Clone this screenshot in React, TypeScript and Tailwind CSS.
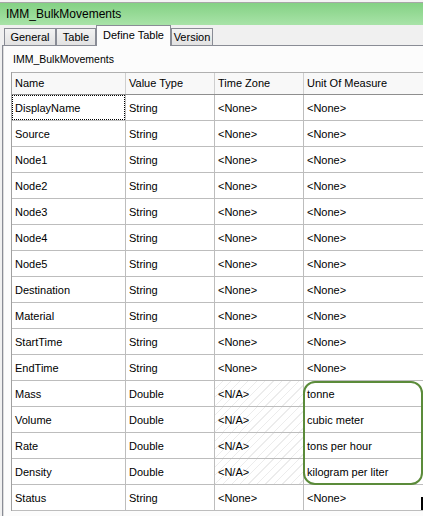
import React from 'react';

type Row = { name: string; type: string; tz: string; unit: string; na?: boolean };

const rows: Row[] = [
  { name: 'DisplayName', type: 'String', tz: '<None>', unit: '<None>' },
  { name: 'Source', type: 'String', tz: '<None>', unit: '<None>' },
  { name: 'Node1', type: 'String', tz: '<None>', unit: '<None>' },
  { name: 'Node2', type: 'String', tz: '<None>', unit: '<None>' },
  { name: 'Node3', type: 'String', tz: '<None>', unit: '<None>' },
  { name: 'Node4', type: 'String', tz: '<None>', unit: '<None>' },
  { name: 'Node5', type: 'String', tz: '<None>', unit: '<None>' },
  { name: 'Destination', type: 'String', tz: '<None>', unit: '<None>' },
  { name: 'Material', type: 'String', tz: '<None>', unit: '<None>' },
  { name: 'StartTime', type: 'String', tz: '<None>', unit: '<None>' },
  { name: 'EndTime', type: 'String', tz: '<None>', unit: '<None>' },
  { name: 'Mass', type: 'Double', tz: '<N/A>', unit: 'tonne', na: true },
  { name: 'Volume', type: 'Double', tz: '<N/A>', unit: 'cubic meter', na: true },
  { name: 'Rate', type: 'Double', tz: '<N/A>', unit: 'tons per hour', na: true },
  { name: 'Density', type: 'Double', tz: '<N/A>', unit: 'kilogram per liter', na: true },
  { name: 'Status', type: 'String', tz: '<None>', unit: '<None>' },
];

const tabs = ['General', 'Table', 'Define Table', 'Version'];

export default function App() {
  return (
    <div className="w-[423px] h-[516px] overflow-hidden bg-[#f0f0f0] text-black font-['Liberation_Sans',Arial,sans-serif] flex flex-col">
      <div className="h-[2px] bg-[#f4f4f4]" />

      {/* Title bar */}
      <div className="h-[23px] border-t border-[#a7a7a7] bg-gradient-to-b from-[#84d184] to-[#a8e3a8] flex items-center pl-[6px] text-[12px]">
        IMM_BulkMovements
      </div>

      {/* Tabs */}
      <div className="h-[20px] flex items-end pl-[4px] text-[11px]">
        {tabs.map(t =>
          t === 'Define Table' ? (
            <div
              key={t}
              className="relative z-10 h-[21px] -mb-px w-[75px] bg-[#fcfcfc] border border-b-0 border-[#898c95] flex items-center justify-center pb-[2px]"
            >
              {t}
            </div>
          ) : (
            <div
              key={t}
              className={`h-[17px] border border-b-0 border-[#898c95] bg-gradient-to-b from-[#f3f3f3] to-[#e2e2e2] flex items-center justify-center ${
                t === 'General' ? 'w-[52px]' : t === 'Table' ? 'w-[40px]' : 'w-[42px]'
              }`}
            >
              {t}
            </div>
          )
        )}
      </div>

      {/* Tab page */}
      <div className="flex-1 ml-[2px] border-t border-l border-[#898c95] bg-[#fcfcfc] shadow-[inset_1px_0_0_#dcdcdc] pl-[8px]">
        <div className="h-[26px] flex items-center pl-[2px] pt-[1px] text-[10.5px]">IMM_BulkMovements</div>

        <div className="relative border-l border-[#a0a0a0] bg-white w-[420px] text-[11px]">
          {/* header */}
          <div className="grid grid-cols-[113px_89px_89px_140px] h-[23px] border-t border-b border-t-[#b0b0b0] border-b-[#8e8e8e] bg-[#f8f8f8]">
            <div className="flex items-center pl-[3px]">Name</div>
            <div className="flex items-center pl-[3px] border-l border-[#cfcfcf]">Value Type</div>
            <div className="flex items-center pl-[3px] border-l border-[#cfcfcf]">Time Zone</div>
            <div className="flex items-center pl-[3px] border-l border-[#cfcfcf]">Unit Of Measure</div>
          </div>

          {rows.map((r, i) => (
            <div key={r.name} className="grid grid-cols-[113px_89px_89px_140px] h-[26px] border-b border-[#bdbdbd]">
              <div className="relative flex items-center pl-[3px] pt-[1px]">
                {r.name}
                {i === 0 && <div className="absolute inset-0 border border-dotted border-black" />}
              </div>
              <div className="flex items-center pl-[3px] pt-[1px] border-l border-[#bdbdbd]">{r.type}</div>
              <div
                className={`flex items-center pl-[3px] pt-[1px] border-l border-[#bdbdbd] ${
                  r.na ? 'bg-[repeating-linear-gradient(135deg,#ffffff_0px,#ffffff_5px,#ececec_5px,#ececec_6px)]' : ''
                }`}
              >
                {r.tz}
              </div>
              <div className="flex items-center pl-[3px] pt-[1px] border-l border-[#bdbdbd]">{r.unit}</div>
            </div>
          ))}

          {/* highlight around unit values */}
          <div className="absolute left-[291px] top-[309px] w-[120px] h-[104px] border-2 border-[#5b8b3a] rounded-[12px]" />
          <div className="absolute left-[409px] top-[425px] w-[2px] h-[13px] bg-black" />
        </div>
      </div>
    </div>
  );
}
